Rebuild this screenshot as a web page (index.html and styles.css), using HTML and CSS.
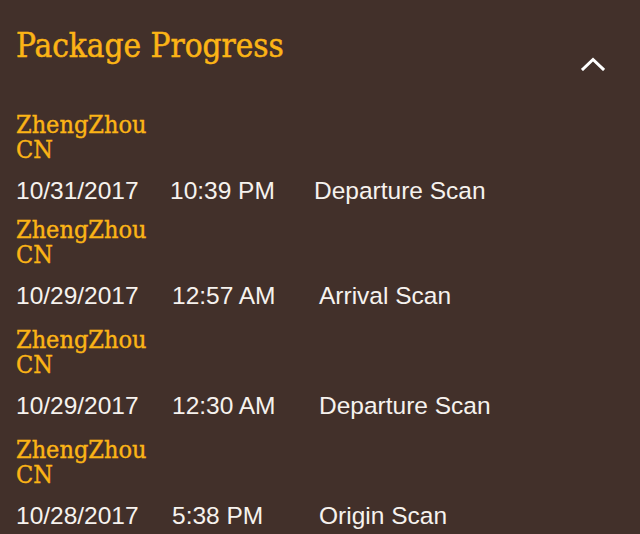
FILE: index.html
```html
<!DOCTYPE html>
<html lang="en">
<head>
<meta charset="utf-8">
<title>Package Progress</title>
<link rel="stylesheet" href="styles.css">
</head>
<body>
<section class="progress">
  <header class="progress-header">
    <h1 class="progress-title">Package Progress</h1>
    <button class="toggle" aria-label="Collapse">
      <svg width="24" height="14" viewBox="0 0 24 14" aria-hidden="true"><path d="M2 12 L12 2.5 L22 12" fill="none" stroke="#ffffff" stroke-width="3" stroke-linecap="square"/></svg>
    </button>
  </header>
  <ol class="events">
    <li class="event event-first">
      <div class="city">ZhengZhou<br>CN</div>
      <div class="scan"><span class="date">10/31/2017</span><span class="time">10:39 PM</span><span class="desc">Departure Scan</span></div>
    </li>
    <li class="event">
      <div class="city">ZhengZhou<br>CN</div>
      <div class="scan"><span class="date">10/29/2017</span><span class="time">12:57 AM</span><span class="desc">Arrival Scan</span></div>
    </li>
    <li class="event">
      <div class="city">ZhengZhou<br>CN</div>
      <div class="scan"><span class="date">10/29/2017</span><span class="time">12:30 AM</span><span class="desc">Departure Scan</span></div>
    </li>
    <li class="event">
      <div class="city">ZhengZhou<br>CN</div>
      <div class="scan"><span class="date">10/28/2017</span><span class="time">5:38 PM</span><span class="desc">Origin Scan</span></div>
    </li>
  </ol>
</section>
</body>
</html>
```
FILE: styles.css
```css
html, body {
  margin: 0;
  padding: 0;
  background: #42302a;
  overflow: hidden;
}
.progress {
  padding: 0 16px;
}
.progress-header {
  display: flex;
  justify-content: space-between;
  align-items: flex-start;
  height: 40px;
  padding-top: 26px;
}
.progress-title {
  margin: 0;
  font-family: "DejaVu Serif", serif;
  font-stretch: condensed;
  font-weight: normal;
  font-size: 33px;
  line-height: 40px;
  color: #fbb416;
  -webkit-text-stroke: 0.5px #fbb416;
}
.toggle {
  margin: 31px 19px 0 0;
  padding: 0;
  border: 0;
  background: none;
  width: 24px;
  height: 14px;
  display: block;
}
.toggle svg {
  display: block;
}
.events {
  list-style: none;
  margin: 46px 0 0;
  padding: 0;
}
.event {
  margin-bottom: 16px;
}
.event-first {
  margin-bottom: 11px;
}
.city {
  font-family: "DejaVu Serif", serif;
  font-stretch: condensed;
  font-size: 25px;
  line-height: 25px;
  color: #fbb416;
  -webkit-text-stroke: 0.4px #fbb416;
}
.scan {
  display: flex;
  margin-top: 14px;
  font-family: "Liberation Sans", Arial, sans-serif;
  font-size: 24.5px;
  line-height: 30px;
  color: #f6f2ee;
}
.event-first .scan {
  margin-top: 14px;
}
.date {
  width: 156px;
}
.time {
  width: 147px;
}
.event-first .date {
  width: 154px;
}
.event-first .time {
  width: 144px;
}
```
